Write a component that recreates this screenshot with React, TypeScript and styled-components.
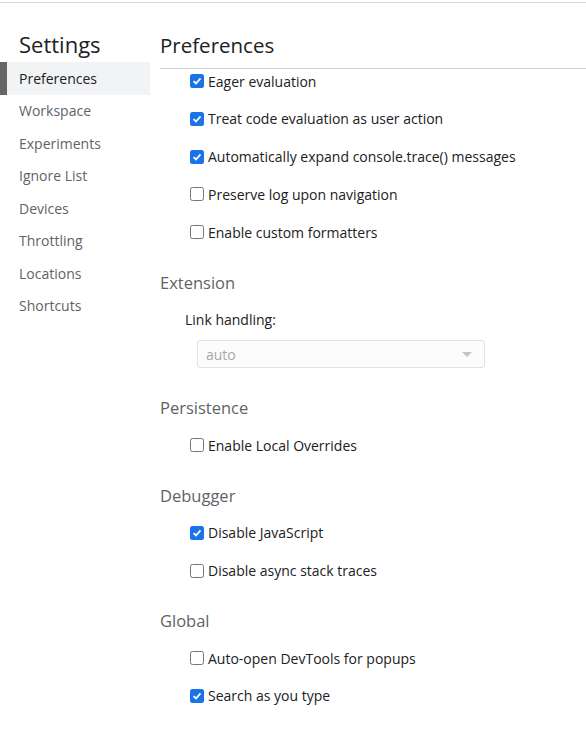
import styled, { createGlobalStyle } from 'styled-components';

const GlobalStyle = createGlobalStyle`
  html, body {
    margin: 0;
    padding: 0;
    background: #ffffff;
  }
  body {
    font-family: "Open Sans", "Noto Sans", sans-serif;
    color: #202124;
  }
`;

const Page = styled.div`
  width: 586px;
  height: 731px;
  padding-top: 2px;
  box-sizing: border-box;
  overflow: hidden;
`;

const Frame = styled.div`
  display: flex;
  border-top: 1px solid #d6d6d6;
  height: 100%;
`;

const Sidebar = styled.nav`
  width: 150px;
  flex-shrink: 0;
  display: flex;
  flex-direction: column;
`;

const SidebarTitle = styled.h1`
  margin: 0;
  padding: 26px 0 3px 19px;
  font-size: 22px;
  font-weight: 400;
  line-height: 30px;
  color: #202124;
`;

const NavItem = styled.div<{ $active?: boolean }>`
  height: 32.5px;
  display: flex;
  align-items: center;
  padding-left: 12px;
  margin-left: 7px;
  font-size: 14px;
  color: ${(p) => (p.$active ? '#202124' : '#5f6368')};
  background: ${(p) => (p.$active ? '#f1f3f4' : 'transparent')};
  position: relative;

  &::before {
    content: '';
    display: ${(p) => (p.$active ? 'block' : 'none')};
    position: absolute;
    left: -7px;
    top: 0;
    bottom: 0;
    width: 7px;
    background: #666666;
  }
`;

const Main = styled.main`
  flex: 1;
  padding-left: 10px;
  display: flex;
  flex-direction: column;
`;

const PanelHeader = styled.h2`
  margin: 0;
  padding: 28px 0 9px;
  font-size: 20.5px;
  font-weight: 400;
  line-height: 28px;
  color: #202124;
  border-bottom: 1px solid #d0d0d0;
`;

const Section = styled.section<{ $first?: boolean }>`
  display: flex;
  flex-direction: column;
  gap: 13.75px;
  margin-top: ${(p) => (p.$first ? '0' : '26.5px')};
`;

const SectionTitle = styled.h3`
  margin: 0 0 -0.75px;
  font-size: 16.5px;
  font-weight: 400;
  line-height: 24px;
  color: #5f6368;
`;

const Row = styled.label`
  display: flex;
  align-items: center;
  height: 24px;
  padding-left: 30px;
  font-size: 14px;
  color: #202124;
`;

const Box = styled.span<{ $checked?: boolean }>`
  width: 14px;
  height: 14px;
  box-sizing: border-box;
  border-radius: 2.5px;
  margin-right: 4px;
  display: inline-flex;
  align-items: center;
  justify-content: center;
  background: ${(p) => (p.$checked ? '#1a73e8' : '#ffffff')};
  border: ${(p) => (p.$checked ? 'none' : '1.2px solid #767676')};
`;

const FieldGroup = styled.div`
  display: flex;
  flex-direction: column;
  gap: 8px;
  padding-left: 25px;
  margin-top: 0.75px;
  margin-bottom: 1.5px;
`;

const FieldLabel = styled.div`
  font-size: 14px;
  line-height: 24px;
  color: #202124;
`;

const Select = styled.div`
  width: 288px;
  height: 28px;
  margin-left: 12px;
  box-sizing: border-box;
  border: 1px solid #e3e3e3;
  border-radius: 3px;
  background: #fcfcfc;
  display: flex;
  align-items: center;
  justify-content: space-between;
  padding: 0 12px 0 8px;
  font-size: 14px;
  color: #a8a8a8;
`;

const Arrow = styled.span`
  width: 0;
  height: 0;
  border-left: 5px solid transparent;
  border-right: 5px solid transparent;
  border-top: 5px solid #c4c4c4;
`;

const Check = ({ checked }: { checked?: boolean }) => (
  <Box $checked={checked}>
    {checked && (
      <svg width="10" height="10" viewBox="0 0 10 10">
        <path d="M1.6 5.2 L4 7.5 L8.5 2.4" fill="none" stroke="#fff" strokeWidth="1.8" />
      </svg>
    )}
  </Box>
);

const Option = ({ label, checked }: { label: string; checked?: boolean }) => (
  <Row>
    <Check checked={checked} />
    {label}
  </Row>
);

const navItems = [
  'Preferences',
  'Workspace',
  'Experiments',
  'Ignore List',
  'Devices',
  'Throttling',
  'Locations',
  'Shortcuts',
];

export default function App() {
  return (
    <>
      <GlobalStyle />
      <Page>
        <Frame>
          <Sidebar>
            <SidebarTitle>Settings</SidebarTitle>
            {navItems.map((item, i) => (
              <NavItem key={item} $active={i === 0}>
                {item}
              </NavItem>
            ))}
          </Sidebar>
          <Main>
            <PanelHeader>Preferences</PanelHeader>
            <Section $first>
              <Option label="Eager evaluation" checked />
              <Option label="Treat code evaluation as user action" checked />
              <Option label="Automatically expand console.trace() messages" checked />
              <Option label="Preserve log upon navigation" />
              <Option label="Enable custom formatters" />
            </Section>
            <Section>
              <SectionTitle>Extension</SectionTitle>
              <FieldGroup>
                <FieldLabel>Link handling:</FieldLabel>
                <Select>
                  auto
                  <Arrow />
                </Select>
              </FieldGroup>
            </Section>
            <Section>
              <SectionTitle>Persistence</SectionTitle>
              <Option label="Enable Local Overrides" />
            </Section>
            <Section>
              <SectionTitle>Debugger</SectionTitle>
              <Option label="Disable JavaScript" checked />
              <Option label="Disable async stack traces" />
            </Section>
            <Section>
              <SectionTitle>Global</SectionTitle>
              <Option label="Auto-open DevTools for popups" />
              <Option label="Search as you type" checked />
            </Section>
          </Main>
        </Frame>
      </Page>
    </>
  );
}
